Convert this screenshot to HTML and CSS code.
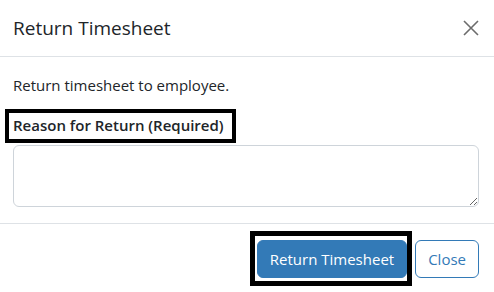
FILE: index.html
```html
<!DOCTYPE html>
<html lang="en">
<head>
<meta charset="utf-8">
<title>Return Timesheet</title>
<link rel="stylesheet" href="styles.css">
</head>
<body>
<div class="modal">
  <div class="modal-header">
    <h5 class="modal-title">Return Timesheet</h5>
    <button class="btn-close" type="button" aria-label="Close">
      <svg viewBox="0 0 16 16" width="16" height="16"><path d="M1 1L15 15M15 1L1 15" stroke="#6c6c6c" stroke-width="1.6" fill="none"/></svg>
    </button>
  </div>
  <div class="modal-body">
    <p class="intro">Return timesheet to employee.</p>
    <label class="form-label marked-label" for="reason">Reason for Return (Required)</label>
    <textarea id="reason" class="form-control" rows="2"></textarea>
  </div>
  <div class="modal-footer">
    <button class="btn btn-primary marked-btn" type="button">Return Timesheet</button>
    <button class="btn btn-outline" type="button">Close</button>
  </div>
</div>
</body>
</html>
```
FILE: styles.css
```css
html, body {
  margin: 0;
  padding: 0;
  background: #fff;
}
body {
  font-family: "Open Sans", "Noto Sans", sans-serif;
  font-size: 15px;
  line-height: 24px;
  color: #212529;
}
.modal {
  width: 494px;
  overflow: hidden;
  height: 292px;
}
.modal-header {
  display: flex;
  align-items: center;
  justify-content: space-between;
  padding: 16px 15px 16px 13px;
  border-bottom: 1px solid #dee2e6;
}
.modal-title {
  margin: 0;
  font-size: 19px;
  line-height: 24px;
  font-weight: 500;
}
.btn-close {
  border: 0;
  background: transparent;
  padding: 0;
  width: 16px;
  height: 16px;
  display: flex;
}
.modal-body {
  padding: 16px 15px 16px 13px;
}
.intro {
  margin: 0 0 16px;
}
.form-label {
  display: inline-block;
  margin-bottom: 8px;
  font-weight: 600;
}
.marked-label {
  position: relative;
}
.marked-label::after {
  content: "";
  position: absolute;
  top: -4px;
  bottom: -6px;
  left: -8px;
  width: 231px;
  border: 4px solid #000;
  box-sizing: border-box;
}
.form-control {
  display: block;
  box-sizing: border-box;
  width: 100%;
  height: 62px;
  padding: 6px 12px;
  font: inherit;
  border: 1px solid #ced4da;
  border-radius: 6px;
  resize: vertical;
}
.modal-footer {
  display: flex;
  justify-content: flex-end;
  align-items: center;
  padding: 12px 11px 12px 12px;
  border-top: 1px solid #dee2e6;
}
.btn {
  margin: 4px;
  font: inherit;
  padding: 6px 12px;
  border-radius: 6px;
  border: 1px solid #337ab7;
  line-height: 24px;
}
.btn-primary {
  background: #337ab7;
  color: #fff;
}
.btn-outline {
  background: #fff;
  color: #337ab7;
}
.marked-btn {
  position: relative;
}
.marked-btn::after {
  content: "";
  position: absolute;
  top: -10px;
  bottom: -9px;
  left: -8px;
  right: -6px;
  border: 5px solid #000;
}
```
